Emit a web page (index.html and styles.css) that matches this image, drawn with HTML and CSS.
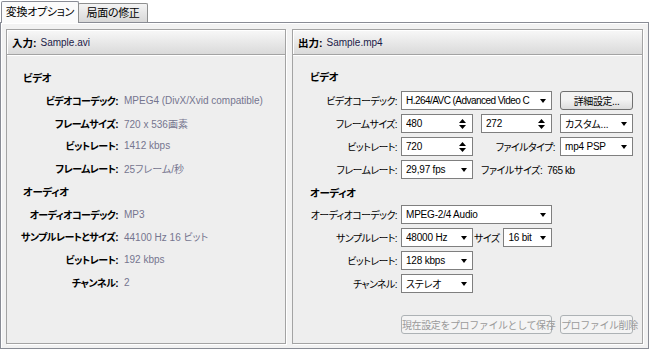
FILE: index.html
```html
<!DOCTYPE html>
<html>
    <head>
        <meta charset="UTF-8">
        <title>変換オプション</title>
        <link rel="stylesheet" href="styles.css">
    </head>
    <body>
        <div class="tabs">
            <div class="tab active">変換オプション</div>
            <div class="tab">局面の修正</div>
        </div>
        <div class="frame">
            <section class="panel src">
                <div class="panelHead"><b>入力:</b><span class="fname">Sample.avi</span></div>
                <div class="info">
                    <h3>ビデオ</h3>
                    <span class="lbl">ビデオコーデック:</span><span class="val">MPEG4 (DivX/Xvid compatible)</span>
                    <span class="lbl">フレームサイズ:</span><span class="val">720 x 536画素</span>
                    <span class="lbl">ビットレート:</span><span class="val">1412 kbps</span>
                    <span class="lbl">フレームレート:</span><span class="val">25フレーム/秒</span>
                    <h3>オーディオ</h3>
                    <span class="lbl">オーディオコーデック:</span><span class="val">MP3</span>
                    <span class="lbl">サンプルレートとサイズ:</span><span class="val">44100 Hz 16 ビット</span>
                    <span class="lbl">ビットレート:</span><span class="val">192 kbps</span>
                    <span class="lbl">チャンネル:</span><span class="val">2</span>
                </div>
            </section>
            <section class="panel out">
                <div class="panelHead"><b>出力:</b><span class="fname">Sample.mp4</span></div>
                <div class="form">
                    <h3>ビデオ</h3>

                    <span class="lbl">ビデオコーデック:</span>
                    <div class="combo c2 wide"><span class="txt tight">H.264/AVC (Advanced Video C</span></div>
                    <button class="btn c4">詳細設定...</button>

                    <span class="lbl">フレームサイズ:</span>
                    <div class="spin c2"><span class="txt">480</span><svg class="updown" width="7" height="10" viewBox="0 0 7 10"><path d="M3.5 0L7 4H0z M0 6h7L3.5 10z"/></svg></div>
                    <div class="spin c3"><span class="txt">272</span><svg class="updown" width="7" height="10" viewBox="0 0 7 10"><path d="M3.5 0L7 4H0z M0 6h7L3.5 10z"/></svg></div>
                    <div class="combo c4"><span class="txt">カスタム...</span></div>

                    <span class="lbl">ビットレート:</span>
                    <div class="spin c2"><span class="txt">720</span><svg class="updown" width="7" height="10" viewBox="0 0 7 10"><path d="M3.5 0L7 4H0z M0 6h7L3.5 10z"/></svg></div>
                    <span class="lbl c3">ファイルタイプ:</span>
                    <div class="combo c4"><span class="txt">mp4 PSP</span></div>

                    <span class="lbl">フレームレート:</span>
                    <div class="combo c2"><span class="txt">29,97 fps</span></div>
                    <span class="note c3">ファイルサイズ:&nbsp; 765 kb</span>

                    <h3>オーディオ</h3>

                    <span class="lbl">オーディオコーデック:</span>
                    <div class="combo c2 wide"><span class="txt">MPEG-2/4 Audio</span></div>

                    <span class="lbl">サンプルレート:</span>
                    <div class="combo c2"><span class="txt">48000 Hz</span></div>
                    <div class="sizeCell c3">
                        <span>サイズ</span>
                        <div class="combo"><span class="txt">16 bit</span></div>
                    </div>

                    <span class="lbl">ビットレート:</span>
                    <div class="combo c2"><span class="txt">128 kbps</span></div>

                    <span class="lbl">チャンネル:</span>
                    <div class="combo c2"><span class="txt">ステレオ</span></div>

                    <button class="btn saveBtn" disabled>現在設定をプロファイルとして保存</button>
                    <button class="btn delBtn" disabled>プロファイル削除</button>
                </div>
            </section>
        </div>
    </body>
</html>
```

FILE: styles.css
```css
* {
    box-sizing: border-box; }

html, body {
    margin: 0; padding: 0;
    background: #fff; color: #000;
    font-family: "Liberation Sans", "Noto Sans CJK JP", sans-serif;
    font-size: 10px;
    font-feature-settings: "palt"; }

h3 {
    margin: 0;
    font-size: 10.5px;
    font-weight: bold;
    letter-spacing: -0.4px; }

/* tab strip */
.tabs {
    display: flex;
    align-items: flex-end;
    height: 22px;
    padding-left: 1px;
    position: relative;
    z-index: 1; }
.tab {
    height: 19px;
    width: 70px;
    margin-left: -1px;
    border: 1px solid #8e8f8f;
    border-bottom: none;
    border-radius: 2px 2px 0 0;
    background: linear-gradient(#f4f4f4, #d8d8d8);
    font-size: 11px;
    line-height: 18px;
    letter-spacing: -0.3px;
    text-align: center; }
.tab.active {
    width: 78px;
    height: 22px;
    margin-left: 0;
    margin-bottom: -1px;
    background: #fbfbfb;
    border-color: #898c95;
    line-height: 20px; }

.frame {
    display: flex;
    gap: 6px;
    height: 327px;
    margin-right: 1px;
    padding: 6px 5px 4px;
    border: 1px solid #898c95;
    background: #f2f2f2;
    box-shadow: inset 1px 1px 0 #fff; }

/* group panels */
.panel {
    display: flex;
    flex-direction: column;
    border: 1px solid #a3a3a3;
    background: #eeeeee;
    box-shadow: 1px 1px 0 #fff; }
.src { width: 280px; }
.out { flex: 1; }

.panelHead {
    display: flex;
    align-items: center;
    gap: 4px;
    height: 25px;
    padding-left: 5px;
    border-bottom: 1px solid #a3a3a3;
    background: linear-gradient(#f8f8f8, #dadada);
    box-shadow: 0 1px 0 #fff, inset 1px 1px 0 #fff;
    font-size: 10.5px; }
.fname {
    font-size: 10px;
    color: #1b1b48; }

/* read-only source info */
.info {
    display: grid;
    grid-template-columns: 111px 1fr;
    grid-template-rows: 24px;
    grid-auto-rows: 22.75px;
    column-gap: 6px;
    align-items: center;
    padding-top: 10px; }
.info h3 {
    grid-column: 1 / -1;
    padding-left: 16px; }
.info .lbl {
    justify-self: end;
    font-weight: bold;
    letter-spacing: -0.6px;
    white-space: nowrap; }
.info .val {
    color: #75758f;
    white-space: nowrap; }

/* output settings form */
.form {
    flex: 1;
    display: grid;
    grid-template-columns: 96px 72px 71px 73px;
    grid-template-rows: 22px repeat(4, 19px) 18px repeat(4, 19px) 1fr 19px;
    column-gap: 8px;
    row-gap: 4px;
    align-items: center;
    padding: 10px 9px 9px 4px; }
.form h3 {
    grid-column: 1 / -1;
    padding-left: 13px; }
.form .lbl {
    grid-column: 1;
    justify-self: end;
    margin-right: -4px;
    letter-spacing: -0.6px;
    white-space: nowrap; }
.form .c2 { grid-column: 2; }
.form .c3 { grid-column: 3; }
.form .c4 { grid-column: 4; }
.form .wide { grid-column: 2 / span 2; }
.form .lbl.c3 { margin-right: -3px; }
.note {
    grid-column: 3 / span 2;
    letter-spacing: -0.4px;
    white-space: nowrap; }

.combo, .spin {
    display: flex;
    align-items: center;
    height: 19px;
    min-width: 0;
    padding-left: 4px;
    border: 1px solid #7f7f7f;
    background: #fff;
    white-space: nowrap;
    overflow: hidden; }
.txt {
    flex: 1;
    overflow: hidden;
    letter-spacing: -0.2px; }
.txt.tight { letter-spacing: -0.55px; }
.combo::after {
    content: "";
    flex-shrink: 0;
    margin: 1px 5px 0 3px;
    border-left: 3.5px solid transparent;
    border-right: 3.5px solid transparent;
    border-top: 4px solid #000; }
.updown {
    flex-shrink: 0;
    margin: 0 6px 0 4px; }

.sizeCell {
    display: flex;
    align-items: center;
    gap: 4px;
    margin-left: -7px;
    letter-spacing: -0.6px; }
.sizeCell .combo { flex: 1; }

.btn {
    height: 19px;
    padding: 0;
    border: 1px solid #707070;
    border-radius: 3px;
    background: linear-gradient(#f3f3f3 45%, #dcdcdc);
    color: #000;
    font-family: inherit;
    font-size: 10px;
    letter-spacing: -0.4px;
    white-space: nowrap; }
.btn:disabled {
    border-color: #adb2b5;
    background: #f4f4f4;
    color: #9a9a9a; }
.saveBtn {
    grid-row: -2;
    grid-column: 2 / span 2; }
.delBtn {
    grid-row: -2;
    grid-column: 4; }
```
